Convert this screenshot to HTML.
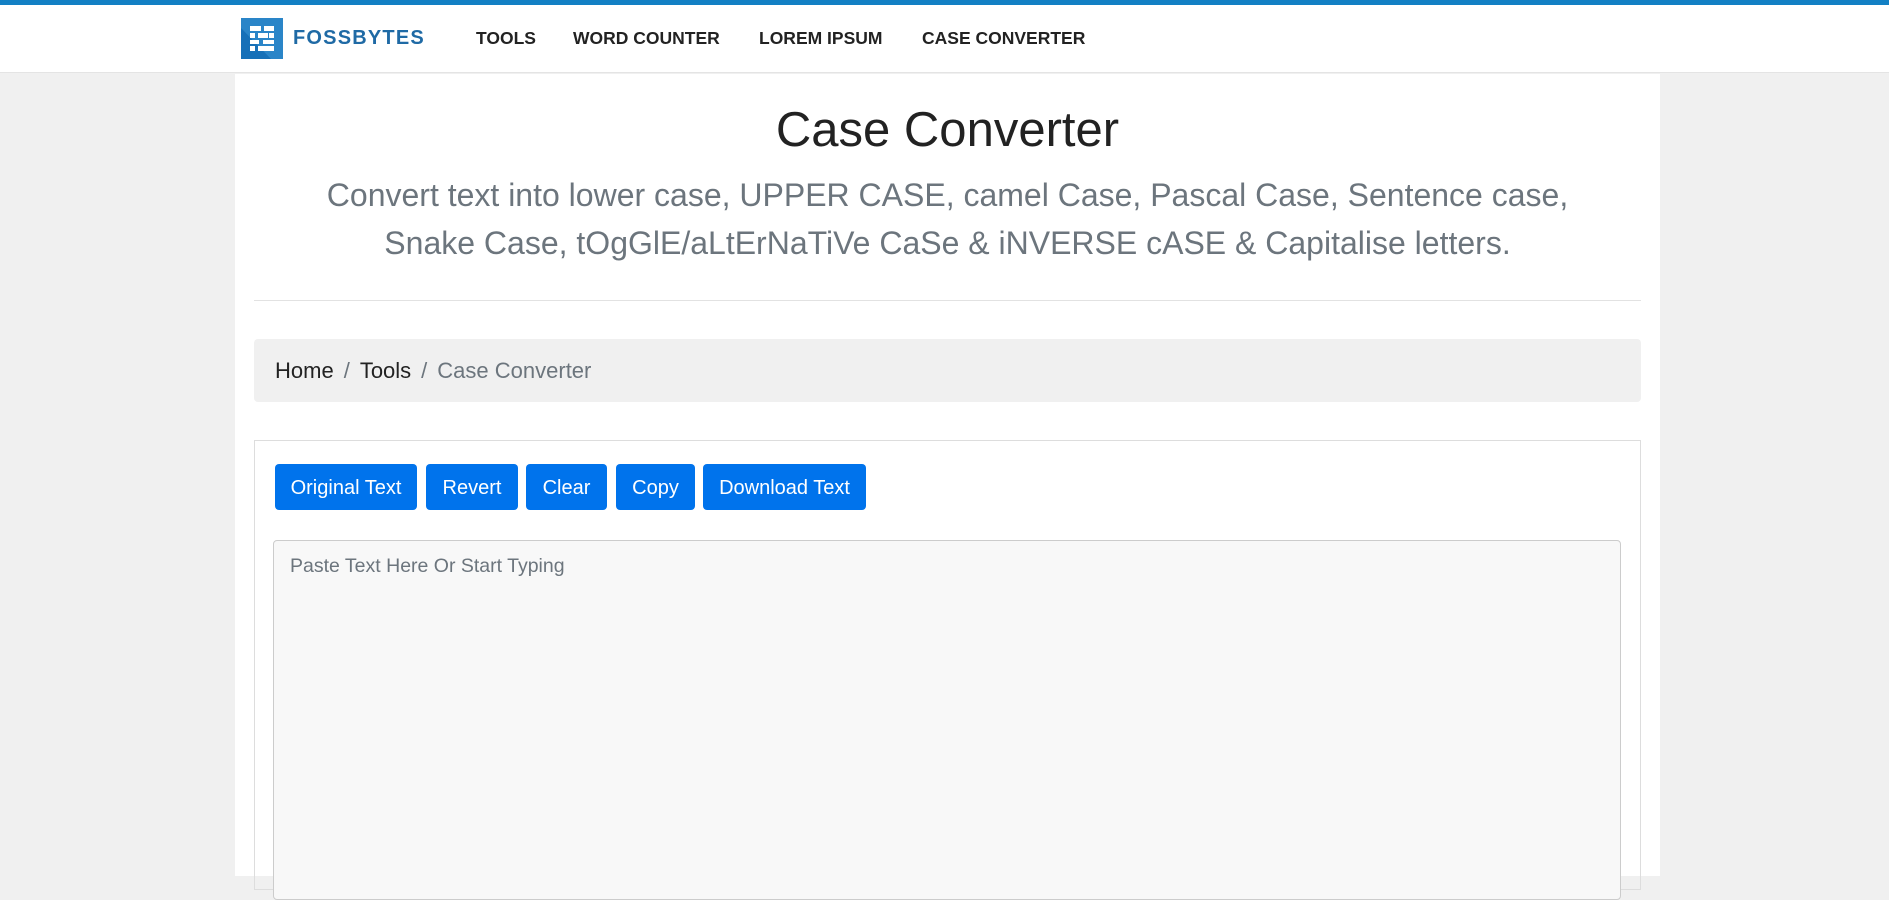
<!DOCTYPE html>
<html><head><meta charset="utf-8"><style>
*{box-sizing:border-box;margin:0;padding:0}
body{width:1889px;height:876px;overflow:hidden;background:#f0f0f0;font-family:"Liberation Sans",Arial,sans-serif;position:relative}
.top{position:absolute;left:0;top:0;width:1889px;height:5px;background:#1380c4}
.hdr{position:absolute;left:0;top:5px;width:1889px;height:68px;background:#fff;border-bottom:1px solid #e4e4e4}
.logo{position:absolute;left:241px;top:18px;width:42px;height:41px;background:#1670b8;overflow:hidden}
.brand{position:absolute;left:293px;top:27px;font-size:20px;font-weight:bold;color:#1f6aa5;letter-spacing:1.2px}
.nav{position:absolute;top:28px;font-size:17.5px;font-weight:bold;color:#222}
.main{position:absolute;left:235px;top:74px;width:1425px;height:802px;background:#fff}
h1{position:absolute;width:1425px;top:102px;text-align:center;font-weight:normal;font-size:49px;color:#222;left:235px}
.sub{position:absolute;left:235px;width:1425px;top:171px;text-align:center;font-size:32px;line-height:48px;color:#6c757d}
.hr{position:absolute;left:254px;top:300px;width:1387px;height:1px;background:#e2e2e2}
.bc{position:absolute;left:254px;top:339px;width:1387px;height:63px;background:#f0f0f0;border-radius:4px;font-size:22px;color:#222;padding:19px 0 0 21px}
.bc .s{color:#6c757d;margin:0 10px}
.card{position:absolute;left:254px;top:440px;width:1387px;height:450px;border:1px solid #ddd}
.btn{position:absolute;top:464px;height:46px;background:#0073ec;color:#fff;border-radius:4px;font-size:20px;text-align:center;line-height:48px}
.ta{position:absolute;left:273px;top:540px;width:1348px;height:360px;background:#f8f8f8;border:1px solid #ccc;border-radius:4px;color:#6c757d;font-size:19.5px;padding:14px 16px}
</style></head><body>
<div class="top"></div>
<div class="hdr"></div>
<div class="logo"><svg width="42" height="41" viewBox="0 0 42 41"><polygon points="0,0 42,0 42,41 30,41 0,10" fill="#2a85c8"/><g fill="#fff"><rect x="9" y="8" width="11" height="5"/><rect x="23" y="8" width="10" height="5"/><rect x="9" y="15" width="5" height="5"/><rect x="17" y="15" width="10" height="5"/><rect x="28" y="15" width="5" height="5"/><rect x="9" y="22" width="9" height="4"/><rect x="22" y="22" width="11" height="4"/><rect x="9" y="28" width="5" height="5"/><rect x="17" y="28" width="16" height="5"/></g></svg></div>
<div class="brand">FOSSBYTES</div>
<div class="nav" style="left:476px">TOOLS</div>
<div class="nav" style="left:573px">WORD COUNTER</div>
<div class="nav" style="left:759px">LOREM IPSUM</div>
<div class="nav" style="left:922px">CASE CONVERTER</div>
<div class="main"></div>
<h1>Case Converter</h1>
<div class="sub">Convert text into lower case, UPPER CASE, camel Case, Pascal Case, Sentence case,<br>Snake Case, tOgGlE/aLtErNaTiVe CaSe &amp; iNVERSE cASE &amp; Capitalise letters.</div>
<div class="hr"></div>
<div class="bc">Home<span class="s">/</span>Tools<span class="s">/</span><span style="color:#6c757d">Case Converter</span></div>
<div class="card"></div>
<div class="btn" style="left:275px;width:142px">Original Text</div>
<div class="btn" style="left:426px;width:92px">Revert</div>
<div class="btn" style="left:526px;width:81px">Clear</div>
<div class="btn" style="left:616px;width:79px">Copy</div>
<div class="btn" style="left:703px;width:163px">Download Text</div>
<div class="ta">Paste Text Here Or Start Typing</div>
</body></html>
